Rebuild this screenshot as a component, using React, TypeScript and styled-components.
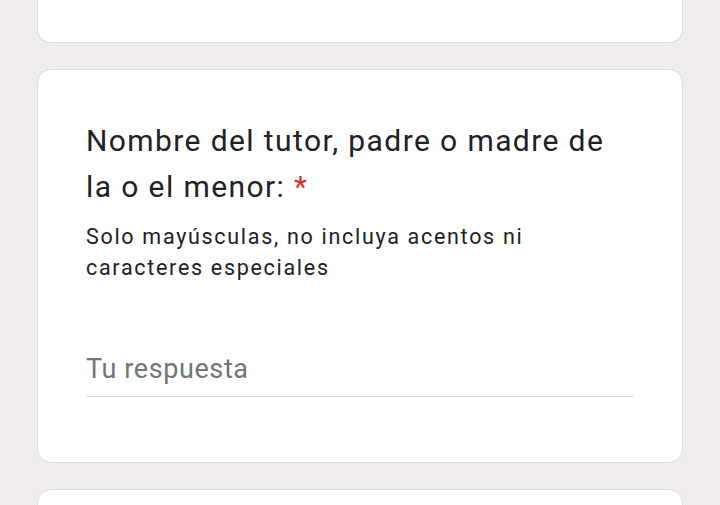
import { createGlobalStyle } from 'styled-components';
import styled from 'styled-components';

const GlobalStyle = createGlobalStyle`
  html, body {
    margin: 0;
    padding: 0;
    background: #f0ebee;
  }
  body {
    font-family: Roboto, "Liberation Sans", Arial, sans-serif;
  }
`;

export default function App() {
  return (
    <>
      <GlobalStyle />
      <Page>
        <PrevCard />
        <QuestionCard>
          <Title>
            Nombre del tutor, padre o madre de la o el menor: <Required>*</Required>
          </Title>
          <Description>Solo mayúsculas, no incluya acentos ni caracteres especiales</Description>
          <AnswerInput type="text" placeholder="Tu respuesta" />
        </QuestionCard>
        <NextCard />
      </Page>
    </>
  );
}

const Page = styled.div`
  display: flex;
  flex-direction: column;
  gap: 26px;
  padding: 0 37px;
  height: 505px;
  overflow: hidden;
  box-sizing: border-box;
`;

const Card = styled.div`
  background: #fff;
  border: 1px solid #dadce0;
  border-radius: 14px;
  box-sizing: border-box;
`;

const PrevCard = styled(Card)`
  height: 43px;
  flex-shrink: 0;
  border-top: 0;
  border-radius: 0 0 14px 14px;
`;

const NextCard = styled(Card)`
  height: 60px;
  flex-shrink: 0;
`;

const QuestionCard = styled(Card)`
  display: flex;
  flex-direction: column;
  padding: 48px 48px 65px;
  flex-shrink: 0;
`;

const Title = styled.div`
  font-size: 30px;
  line-height: 46px;
  color: #202124;
  letter-spacing: 1.4px;
`;

const Required = styled.span`
  color: #d93025;
`;

const Description = styled.div`
  margin-top: 11px;
  font-size: 21.5px;
  line-height: 31px;
  color: #202124;
  letter-spacing: 1.7px;
  padding-right: 80px;
`;

const AnswerInput = styled.input`
  margin-top: 59px;
  height: 54px;
  padding: 0;
  border: 0;
  border-bottom: 1px solid #dadce0;
  background: transparent;
  font-family: Roboto, "Liberation Sans", Arial, sans-serif;
  font-size: 27px;
  letter-spacing: 0.6px;
  color: #202124;
  outline: none;

  &::placeholder {
    color: #70757a;
  }
`;
